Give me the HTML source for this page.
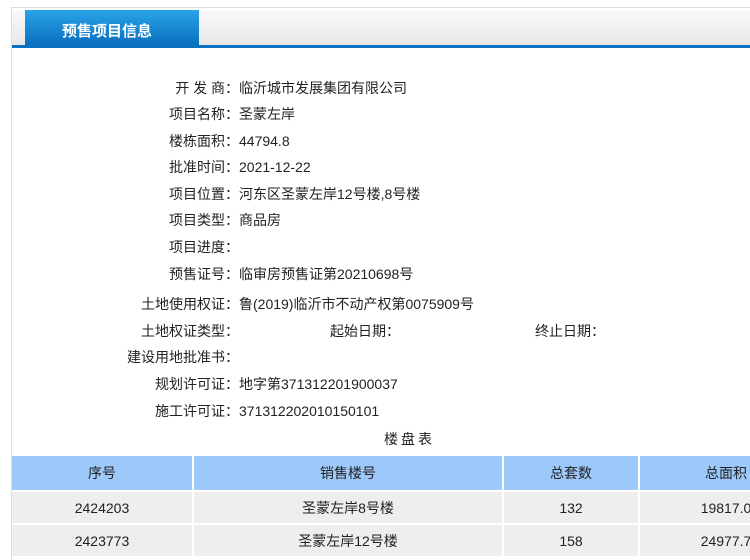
<!DOCTYPE html><html style="overflow:hidden;height:560px"><head><meta charset="utf-8"><style>
body{margin:0;width:750px;height:560px;background:#fff;font-family:"Liberation Sans","Noto Sans CJK SC",sans-serif;font-size:14px;color:#222;overflow:hidden;position:relative}
.frame{position:absolute;left:11px;top:7px;width:738px;height:552px;border:1px solid #ddd;border-right:none;border-bottom:none}
.bar{position:absolute;left:12px;top:10px;width:738px;height:35px;background:linear-gradient(#fafafa,#e8e8e8);border-bottom:3px solid #0a70c0}
.tab{position:absolute;left:25px;top:10px;width:174px;height:35px;background:linear-gradient(#2aa4e8,#0a6fbe);color:#fff;font-weight:bold;font-size:15px;line-height:44px;text-align:center;text-indent:-10px}
.row{position:absolute;left:0;width:750px;height:20px;line-height:20px}
.l{position:absolute;right:511px;white-space:nowrap;text-align:right}
.v{position:absolute;left:239px;white-space:nowrap}
.wrap{position:absolute;left:0;top:0;width:750px;height:560px;overflow:hidden}
table{position:absolute;left:10px;top:454px;border-collapse:separate;border-spacing:2px;width:804px;table-layout:fixed}
td{height:31px;text-align:center;background:#eee;padding:0}
th{height:34px;background:#9cc8fa;font-weight:normal;padding:0}
</style></head><body><div class="wrap">
<div class="frame"></div><div class="bar"></div><div class="tab">预售项目信息</div>
<div class="row" style="top:78px"><span class="l">开 发 商：</span><span class="v">临沂城市发展集团有限公司</span></div>
<div class="row" style="top:104px"><span class="l">项目名称：</span><span class="v">圣蒙左岸</span></div>
<div class="row" style="top:131px"><span class="l">楼栋面积：</span><span class="v">44794.8</span></div>
<div class="row" style="top:157px"><span class="l">批准时间：</span><span class="v">2021-12-22</span></div>
<div class="row" style="top:184px"><span class="l">项目位置：</span><span class="v">河东区圣蒙左岸12号楼,8号楼</span></div>
<div class="row" style="top:210px"><span class="l">项目类型：</span><span class="v">商品房</span></div>
<div class="row" style="top:237px"><span class="l">项目进度：</span></div>
<div class="row" style="top:264px"><span class="l">预售证号：</span><span class="v">临审房预售证第20210698号</span></div>
<div class="row" style="top:294px"><span class="l">土地使用权证：</span><span class="v">鲁(2019)临沂市不动产权第0075909号</span></div>
<div class="row" style="top:321px"><span class="l">土地权证类型：</span><span class="v" style="left:330px">起始日期：</span><span class="v" style="left:535px">终止日期：</span></div>
<div class="row" style="top:347px"><span class="l">建设用地批准书：</span></div>
<div class="row" style="top:374px"><span class="l">规划许可证：</span><span class="v">地字第371312201900037</span></div>
<div class="row" style="top:401px"><span class="l">施工许可证：</span><span class="v">371312202010150101</span></div>
<div class="row" style="top:429px;left:384px;width:auto;letter-spacing:3px">楼盘表</div>
<table><colgroup><col style="width:180px"><col style="width:308px"><col style="width:134px"><col></colgroup>
<tr><th>序号</th><th>销售楼号</th><th>总套数</th><th>总面积</th></tr>
<tr><td>2424203</td><td>圣蒙左岸8号楼</td><td>132</td><td>19817.0</td></tr>
<tr><td>2423773</td><td>圣蒙左岸12号楼</td><td>158</td><td>24977.7</td></tr></table>
</div></body></html>
